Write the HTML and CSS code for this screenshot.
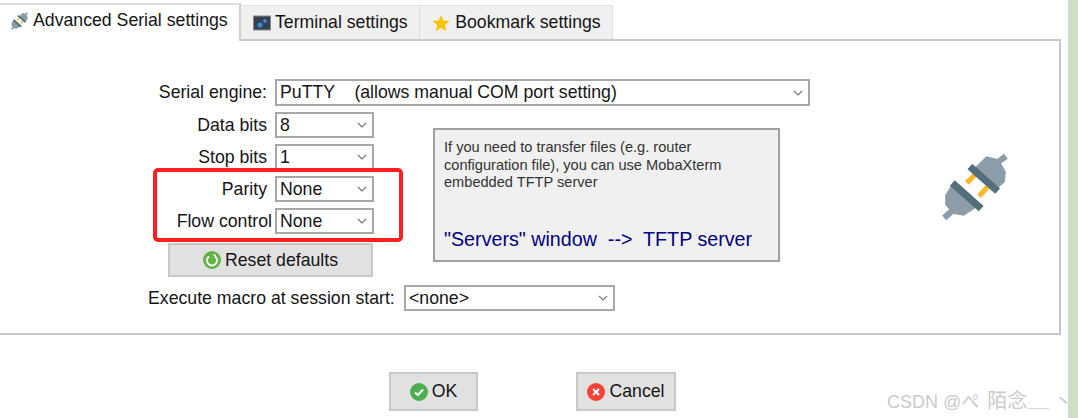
FILE: index.html
```html
<!DOCTYPE html>
<html lang="en">
<head>
    <meta charset="UTF-8">
    <title>Advanced Serial settings</title>
    <link rel="stylesheet" href="styles.css">
</head>
<body>
    <svg class="defs" width="0" height="0">
        <symbol id="plug" viewBox="20 20 70 70">
            <path d="M55 38 66 27 78 30 85 42 84 52 75 60Z" fill="#8c9ca8"/>
            <path d="M32 55 26 65 26 74 33 83 44 85 58 76Z" fill="#8c9ca8"/>
            <path d="M77 33 85 27M33 80 25 87" stroke="#8c9ca8" stroke-width="6" fill="none"/>
            <path d="M47 53 55 45M59 66 67 57" stroke="#fbb82b" stroke-width="5" fill="none"/>
            <path d="M50 37 77 61M33 53 61 78" stroke="#546e7a" stroke-width="7" fill="none"/>
        </symbol>
    </svg>

    <div class="main">
        <div class="tabs">
            <div class="tab active">
                <svg class="tab-plug"><use href="#plug"/></svg>
                Advanced Serial settings
            </div>
            <div class="tab">
                <svg class="tab-icon" viewBox="0 0 18 15">
                    <rect x="0.5" y="0.5" width="17" height="14" fill="#33414f" stroke="#8a8a8a"/>
                    <circle cx="7" cy="9.5" r="2.5" fill="#2f8fd8"/>
                    <circle cx="12" cy="5.5" r="2" fill="#5a78d8"/>
                </svg>
                Terminal settings
            </div>
            <div class="tab">
                <svg class="tab-icon star" viewBox="0 0 18 17">
                    <path d="M9 0 11.6 5.9 18 6.5 13.200 10.700 14.600 17 9 13.700 3.400 17 4.800 10.700 0 6.500 6.400 5.900Z" fill="#fbc40a"/>
                </svg>
                Bookmark settings
            </div>
        </div>

        <div class="panel">
            <div class="field top">
                <label>Serial engine:</label>
                <div class="select wide">
                    <span>PuTTY    (allows manual COM port setting)</span>
                    <svg class="chevron" viewBox="0 0 10 6"><path d="M1 1 5 5 9 1"/></svg>
                </div>
            </div>

            <div class="panel-body">
                <div class="form-col">
                    <div class="field">
                        <label>Data bits</label>
                        <div class="select">
                            <span>8</span>
                            <svg class="chevron" viewBox="0 0 10 6"><path d="M1 1 5 5 9 1"/></svg>
                        </div>
                    </div>
                    <div class="field">
                        <label>Stop bits</label>
                        <div class="select">
                            <span>1</span>
                            <svg class="chevron" viewBox="0 0 10 6"><path d="M1 1 5 5 9 1"/></svg>
                        </div>
                    </div>
                    <div class="field">
                        <label>Parity</label>
                        <div class="select">
                            <span>None</span>
                            <svg class="chevron" viewBox="0 0 10 6"><path d="M1 1 5 5 9 1"/></svg>
                        </div>
                    </div>
                    <div class="field">
                        <label class="tight">Flow control</label>
                        <div class="select">
                            <span>None</span>
                            <svg class="chevron" viewBox="0 0 10 6"><path d="M1 1 5 5 9 1"/></svg>
                        </div>
                    </div>
                    <div class="btn reset">
                        <svg class="btn-icon" viewBox="0 0 18 18">
                            <circle cx="9" cy="9" r="9" fill="#62b246"/>
                            <path d="M6 5.500A5 5 0 1 0 12 5.500" fill="none" stroke="#fff" stroke-width="1.800"/>
                            <path d="M9.500 3.500 13 3.500 13 7Z" fill="#fff"/>
                        </svg>
                        Reset defaults
                    </div>
                </div>

                <div class="info">
                    <p>If you need to transfer files (e.g. router configuration file), you can use MobaXterm embedded TFTP server</p>
                    <p class="info-link">"Servers" window  --&gt;  TFTP server</p>
                </div>

                <svg class="big-plug"><use href="#plug"/></svg>
            </div>

            <div class="macro">
                <label>Execute macro at session start:</label>
                <div class="select macro-select">
                    <span>&lt;none&gt;</span>
                    <svg class="chevron" viewBox="0 0 10 6"><path d="M1 1 5 5 9 1"/></svg>
                </div>
            </div>
        </div>

        <div class="footer">
            <div class="btn ok">
                <svg class="btn-icon" viewBox="0 0 18 18">
                    <circle cx="9" cy="9" r="9" fill="#4cae50"/>
                    <path d="M5 9.500 8 12 13 6.500" fill="none" stroke="#fff" stroke-width="2"/>
                </svg>
                OK
            </div>
            <div class="btn cancel">
                <svg class="btn-icon" viewBox="0 0 18 18">
                    <circle cx="9" cy="9" r="9" fill="#f44336"/>
                    <path d="M6 6 12 12M12 6 6 12" fill="none" stroke="#fff" stroke-width="2"/>
                </svg>
                Cancel
            </div>
        </div>
    </div>

    <div class="strip"></div>

    <!-- annotation and watermark sit on top of the dialog -->
    <div class="highlight"></div>
    <div class="watermark">CSDN @ぺ <span class="name">陌念<span class="wave">﹏﹏</span></span> 丶</div>
</body>
</html>
```

FILE: styles.css
```css
body {
    font-family: "Liberation Sans", "Noto Sans CJK SC", Arial, sans-serif;
    font-size: 17.7px;
    color: #151515;
    display: flex;
    width: 1078px;
    height: 418px;
    margin: 0;
    background-color: #fff;
    overflow: hidden;
    position: relative;
}
.defs {
    position: absolute;
}
.main {
    width: 1068px;
}
.strip {
    width: 10px;
    background-color: #cfdfc4;
}
.tabs {
    display: flex;
    align-items: flex-end;
    height: 39px;
}
.tab {
    display: flex;
    align-items: center;
    height: 34px;
    box-sizing: border-box;
    padding: 0 11px 0 12px;
    background-color: #f0f0f0;
    border-top: 1px solid #e4e4e4;
    border-right: 1px solid #dcdcdc;
}
.tab.active {
    height: 38px;
    width: 241px;
    padding: 0 0 5px 10px;
    margin-bottom: -2px;
    background-color: #fff;
    border-top: 2px solid #e0e0e0;
    border-right: 2px solid #d0d0d0;
    z-index: 1;
}
.tab-plug {
    width: 19px;
    height: 19px;
    margin-right: 4px;
}
.tab-icon {
    width: 18px;
    height: 16px;
    margin-right: 4px;
}
.tab-icon.star {
    margin-right: 5.5px;
}
.panel {
    height: 296px;
    box-sizing: border-box;
    margin-right: 7px;
    padding-top: 38px;
    border: 2px solid #c8c8c8;
    border-left: 0;
}
.panel-body {
    display: flex;
    margin-top: 6px;
}
.form-col {
    display: flex;
    flex-direction: column;
    gap: 6px;
    width: 374px;
}
.field {
    display: flex;
    align-items: center;
    height: 26px;
}
.field.top {
    height: 27px;
}
.field label {
    flex: none;
    width: 267px;
    margin-right: 8px;
    text-align: right;
    white-space: nowrap;
}
.field label.tight {
    width: 272px;
    margin-right: 3px;
}
.select {
    flex: none;
    display: flex;
    align-items: center;
    justify-content: space-between;
    width: 99px;
    height: 26px;
    box-sizing: border-box;
    padding: 0 5px 0 3px;
    border: 2px solid #a8a8a8;
    background-color: #fff;
    white-space: pre;
}
.select.wide {
    width: 535px;
    height: 27px;
}
.select.macro-select {
    width: 211px;
}
.chevron {
    width: 10px;
    height: 6px;
}
.chevron path {
    fill: none;
    stroke: #777;
    stroke-width: 1.2;
}
.btn {
    display: flex;
    align-items: center;
    justify-content: center;
    box-sizing: border-box;
    background-color: #e1e1e1;
    border: 2px solid #c8c8c8;
}
.btn-icon {
    width: 18px;
    height: 18px;
    margin-right: 4px;
}
.reset {
    width: 205px;
    height: 34px;
    margin: 3px 0 0 168px;
}
.info {
    flex: none;
    width: 347px;
    height: 134px;
    box-sizing: border-box;
    margin: 16px 0 0 59px;
    padding: 9px 30px 0 9px;
    background-color: #f0f0f0;
    border: 2px solid #a0a0a0;
    font-size: 14.6px;
    line-height: 17.5px;
    color: #333;
    position: relative;
}
.info p {
    margin: 0;
}
.info-link {
    position: absolute;
    left: 9px;
    bottom: 10px;
    font-size: 19.7px;
    line-height: 22px;
    color: #000080;
    white-space: pre;
}
.big-plug {
    flex: none;
    width: 72px;
    height: 72px;
    margin: 37px 0 0 159px;
}
.macro {
    display: flex;
    align-items: center;
    margin: 8px 0 0 148px;
}
.macro label {
    flex: none;
    width: 247px;
    margin-right: 9px;
    white-space: nowrap;
}
.footer {
    display: flex;
    gap: 98px;
    padding: 37px 0 0 389px;
}
.ok, .cancel {
    height: 39px;
}
.ok {
    width: 89px;
}
.cancel {
    width: 100px;
}
.highlight {
    position: absolute;
    left: 153px;
    top: 168px;
    width: 250px;
    height: 74px;
    box-sizing: border-box;
    border: 4.5px solid #fb1f1f;
    border-radius: 5px;
}
.watermark {
    position: absolute;
    left: 887px;
    top: 385px;
    font-size: 18px;
    color: #cbcbcb;
    white-space: nowrap;
}
.name {
    font-size: 20px;
    margin-left: 3px;
}
.wave {
    font-size: 11px;
}
```
